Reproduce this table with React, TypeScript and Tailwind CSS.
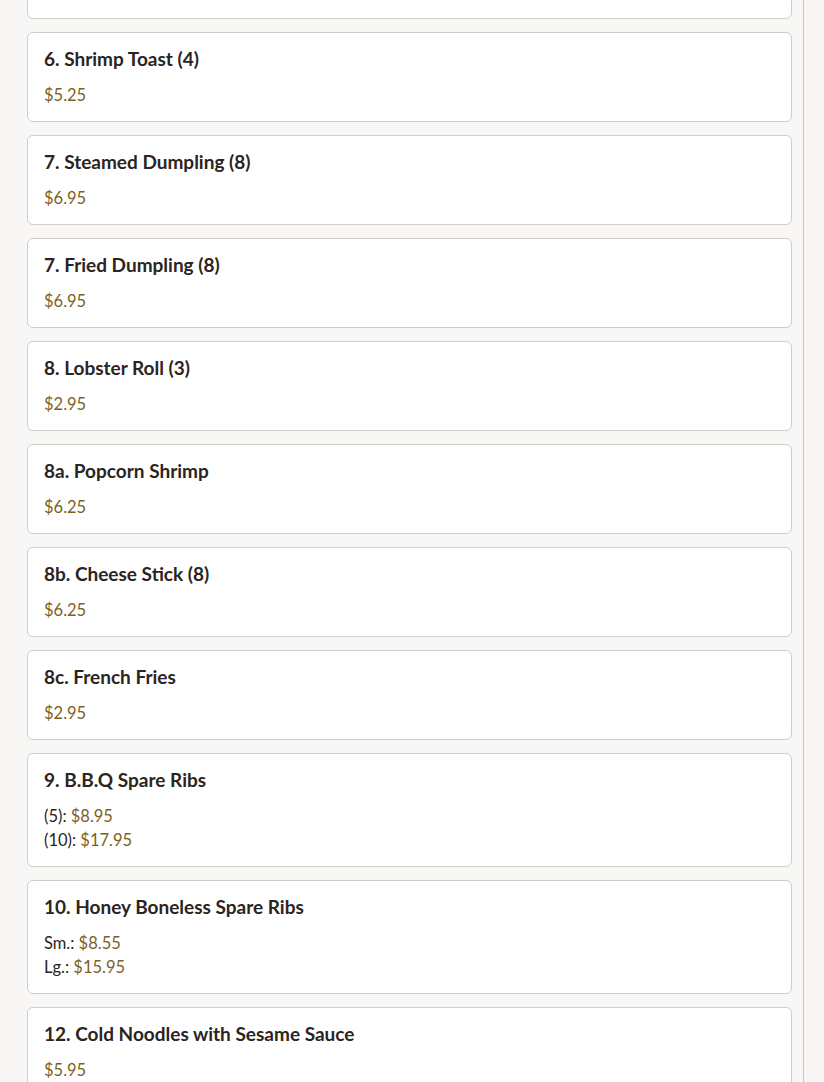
import * as React from "react";

type Price = { label?: string; amount: string };

type MenuItem = {
  name: string;
  prices: Price[];
};

const items: MenuItem[] = [
  { name: "5. Egg Roll (1)", prices: [{ amount: "$1.95" }] },
  { name: "6. Shrimp Toast (4)", prices: [{ amount: "$5.25" }] },
  { name: "7. Steamed Dumpling (8)", prices: [{ amount: "$6.95" }] },
  { name: "7. Fried Dumpling (8)", prices: [{ amount: "$6.95" }] },
  { name: "8. Lobster Roll (3)", prices: [{ amount: "$2.95" }] },
  { name: "8a. Popcorn Shrimp", prices: [{ amount: "$6.25" }] },
  { name: "8b. Cheese Stick (8)", prices: [{ amount: "$6.25" }] },
  { name: "8c. French Fries", prices: [{ amount: "$2.95" }] },
  {
    name: "9. B.B.Q Spare Ribs",
    prices: [
      { label: "(5)", amount: "$8.95" },
      { label: "(10)", amount: "$17.95" },
    ],
  },
  {
    name: "10. Honey Boneless Spare Ribs",
    prices: [
      { label: "Sm.", amount: "$8.55" },
      { label: "Lg.", amount: "$15.95" },
    ],
  },
  { name: "12. Cold Noodles with Sesame Sauce", prices: [{ amount: "$5.95" }] },
  { name: "13. Chicken Wings (4)", prices: [{ amount: "$6.95" }] },
];

const MenuCard: React.FC<{ item: MenuItem }> = ({ item }) => (
  <div className="bg-white border border-[#cfcdca] rounded-md px-4 pt-4 pb-[14px]">
    <h3 className="text-[19px] leading-5 font-bold text-[#2b2420]">
      {item.name}
    </h3>
    <div className="mt-[14px]">
      {item.prices.map((p, i) => (
        <div key={i} className="text-[16.5px] leading-6 text-[#2b2420]">
          {p.label && <span>{p.label}: </span>}
          <span className="text-[#7d5f1f]">{p.amount}</span>
        </div>
      ))}
    </div>
  </div>
);

export default function App() {
  return (
    <div
      className="h-[1082px] overflow-hidden bg-[#f8f7f5]"
      style={{ fontFamily: "Lato, 'Noto Sans', sans-serif" }}
    >
      <div className="w-[804px] h-full flex flex-col border-r border-[#c9c7c4] pl-[27px] pr-[11px]">
        <div className="-mt-[71px] flex flex-col gap-[13px]">
          {items.map((item, i) => (
            <MenuCard key={i} item={item} />
          ))}
        </div>
      </div>
    </div>
  );
}
